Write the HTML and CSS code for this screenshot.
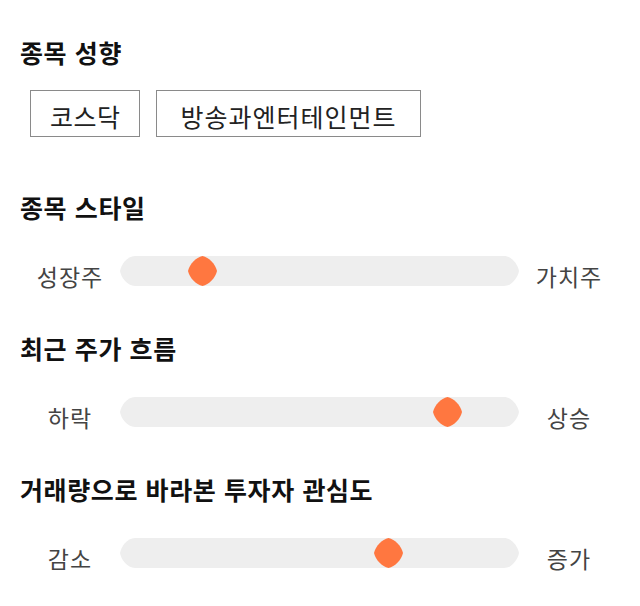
FILE: index.html
```html
<!DOCTYPE html>
<html lang="ko">
<head>
<meta charset="utf-8">
<link rel="stylesheet" href="styles.css">
</head>
<body>
<main class="page">
  <h2 class="title first">종목 성향</h2>
  <div class="tags">
    <span class="tag">코스닥</span>
    <span class="tag tag-wide">방송과엔터테인먼트</span>
  </div>

  <h2 class="title section">종목 스타일</h2>
  <div class="slider">
    <span class="label">성장주</span>
    <div class="track"><span class="thumb" style="left: 68px"></span></div>
    <span class="label">가치주</span>
  </div>

  <h2 class="title after-slider">최근 주가 흐름</h2>
  <div class="slider">
    <span class="label">하락</span>
    <div class="track"><span class="thumb" style="left: 313px"></span></div>
    <span class="label">상승</span>
  </div>

  <h2 class="title after-slider">거래량으로 바라본 투자자 관심도</h2>
  <div class="slider">
    <span class="label">감소</span>
    <div class="track"><span class="thumb" style="left: 254px"></span></div>
    <span class="label">증가</span>
  </div>
</main>
</body>
</html>
```
FILE: styles.css
```css
html, body {
  margin: 0;
  padding: 0;
  background: #ffffff;
}

body {
  font-family: "Noto Sans CJK KR", "Noto Sans", sans-serif;
  color: #111111;
}

.page {
  padding: 34px 20px 40px 20px;
}

.title {
  margin: 0;
  font-size: 25px;
  font-weight: 700;
  line-height: 36px;
  letter-spacing: 0.6px;
  color: #111111;
}

.title.section {
  margin-top: 52px;
}

.title.after-slider {
  margin-top: 44px;
}

.tags {
  display: flex;
  gap: 16px;
  margin-top: 20px;
  padding-left: 10px;
}

.tag {
  display: block;
  box-sizing: content-box;
  height: 45px;
  border: 1px solid #8a8a8a;
  padding: 0 18px 0 19px;
  font-size: 25px;
  line-height: 51px;
  letter-spacing: 0.5px;
  overflow: hidden;
  color: #222222;
}

.tag-wide {
  padding: 0 23px 0 24px;
  letter-spacing: 1px;
}

.slider {
  display: flex;
  align-items: center;
  margin-top: 31px;
  height: 30px;
}

.label {
  width: 100px;
  flex: none;
  text-align: center;
  font-size: 23px;
  line-height: 30px;
  letter-spacing: 1px;
  padding-top: 10px;
  color: #444444;
}

.track {
  position: relative;
  width: 399px;
  height: 30px;
  flex: none;
  background: #eeeeee;
  clip-path: path("M15,0 H384 C392,0 398,9 399,15 C398,21 392,30 384,30 H15 C7,30 1,21 0,15 C1,9 7,0 15,0 Z");
}

.thumb {
  position: absolute;
  top: 0;
  width: 29px;
  height: 30px;
  background: #ff7740;
  clip-path: path("M14.5,0 C21,1.5 27.5,8 29,15 C27.5,22 21,28.5 14.5,30 C8,28.5 1.5,22 0,15 C1.5,8 8,1.5 14.5,0 Z");
}
```
